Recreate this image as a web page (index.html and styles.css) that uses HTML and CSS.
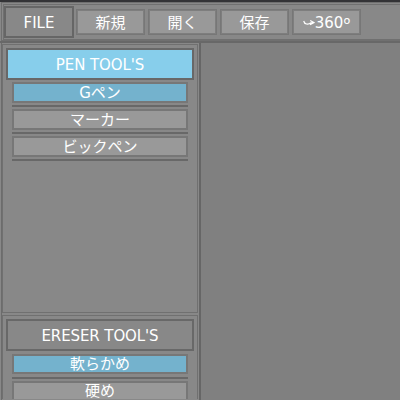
FILE: index.html
```
<!DOCTYPE html>
<html lang="ja">
<head>
<meta charset="utf-8">
<title>Paint</title>
<link rel="stylesheet" href="styles.css">
</head>
<body>
<header class="menu">
  <div class="bar">
    <div class="file">FILE</div>
    <div class="button">新規</div>
    <div class="button">開く</div>
    <div class="button">保存</div>
    <div class="button"><svg class="arrow" viewBox="0 0 12 8"><path d="M.7 2C1.5 5.5 5 6 8 3.8L10.8 3.6M7.2 1.4L11 3.6L7 5.6"/></svg>360<span class="degree">º</span></div>
  </div>
</header>
<main class="work">
  <aside class="side">
    <section class="panel pens">
      <h2 class="title active">PEN TOOL'S</h2>
      <div class="tool selected">Gペン</div><hr>
      <div class="tool">マーカー</div><hr>
      <div class="tool">ビックペン</div><hr>
    </section>
    <section class="panel erasers">
      <h2 class="title">ERESER TOOL'S</h2>
      <div class="tool selected">軟らかめ</div><hr>
      <div class="tool">硬め</div>
    </section>
  </aside>
  <div class="canvas"></div>
</main>
</body>
</html>
```
FILE: styles.css
```
* { box-sizing: border-box; }
body {
  margin: 0;
  height: 400px;
  overflow: hidden;
  display: flex;
  flex-direction: column;
  background: #888;
  border-top: 2px solid #333336;
  color: #fff;
  font: 15px/18px "DejaVu Sans", "Noto Sans CJK JP", sans-serif;
}
.menu {
  flex: none;
  height: 39px;
  padding: 1px 0 1px 1px;
  margin-left: 1px;
  border: 1px solid #707070;
  border-right: 0;
}
.bar {
  height: 36px;
  display: flex;
  align-items: center;
  gap: 3px;
  border: 1px solid #707070;
  border-right: 0;
}
.file {
  width: 70px;
  height: 32px;
  margin-right: -1px;
  padding-top: 2px;
  border: 2px solid #666;
  display: flex;
  align-items: center;
  justify-content: center;
}
.button {
  width: 69px;
  height: 26px;
  padding-top: 2px;
  border: 1px solid #777;
  outline: 1px solid #7e7e7e;
  outline-offset: -2px;
  background: #999;
  display: flex;
  align-items: center;
  justify-content: center;
}
.arrow {
  width: 12px;
  height: 8px;
  fill: none;
  stroke: #fff;
  stroke-width: 1.2;
}
.degree { font-family: "Noto Sans", sans-serif; font-size: 18px; margin-top: 2px; }
.work { flex: 1; min-height: 0; display: flex; border-top: 2px solid #686868; }
.side {
  width: 200px;
  margin-left: 1px;
  padding: 1px 1px 0 0;
  border-left: 1px solid #6c6c6c;
  border-right: 2px solid #666;
}
.panel {
  width: 196px;
  border: 1px solid #707070;
  padding: 3px 3px 0;
  overflow: hidden;
}
.pens { height: 269px; margin-bottom: 2px; }
.erasers { height: 84px; border-bottom: 0; }
.title {
  height: 32px;
  margin: 0 0 2px;
  padding-top: 2px;
  border: 2px solid #686868;
  display: flex;
  align-items: center;
  justify-content: center;
  font-size: 15px;
  font-weight: 400;
  letter-spacing: -0.1px;
}
.active { background: #87ceeb; }
.tool {
  height: 21px;
  margin: 0 6px;
  border: 2px solid #777;
  background: #999;
  display: flex;
  align-items: center;
  justify-content: center;
  line-height: 15px;
  padding-top: 1px;
}
.selected { background: #74b2cd; }
hr {
  height: 2px;
  margin: 2px 6px;
  border: 0;
  background: #686868;
}
.erasers .title { margin-bottom: 3px; }
.erasers .tool { height: 20px; padding-top: 1px; }
.erasers hr { margin-top: 3px; }
.canvas { flex: 1; background: #808080; }
```
